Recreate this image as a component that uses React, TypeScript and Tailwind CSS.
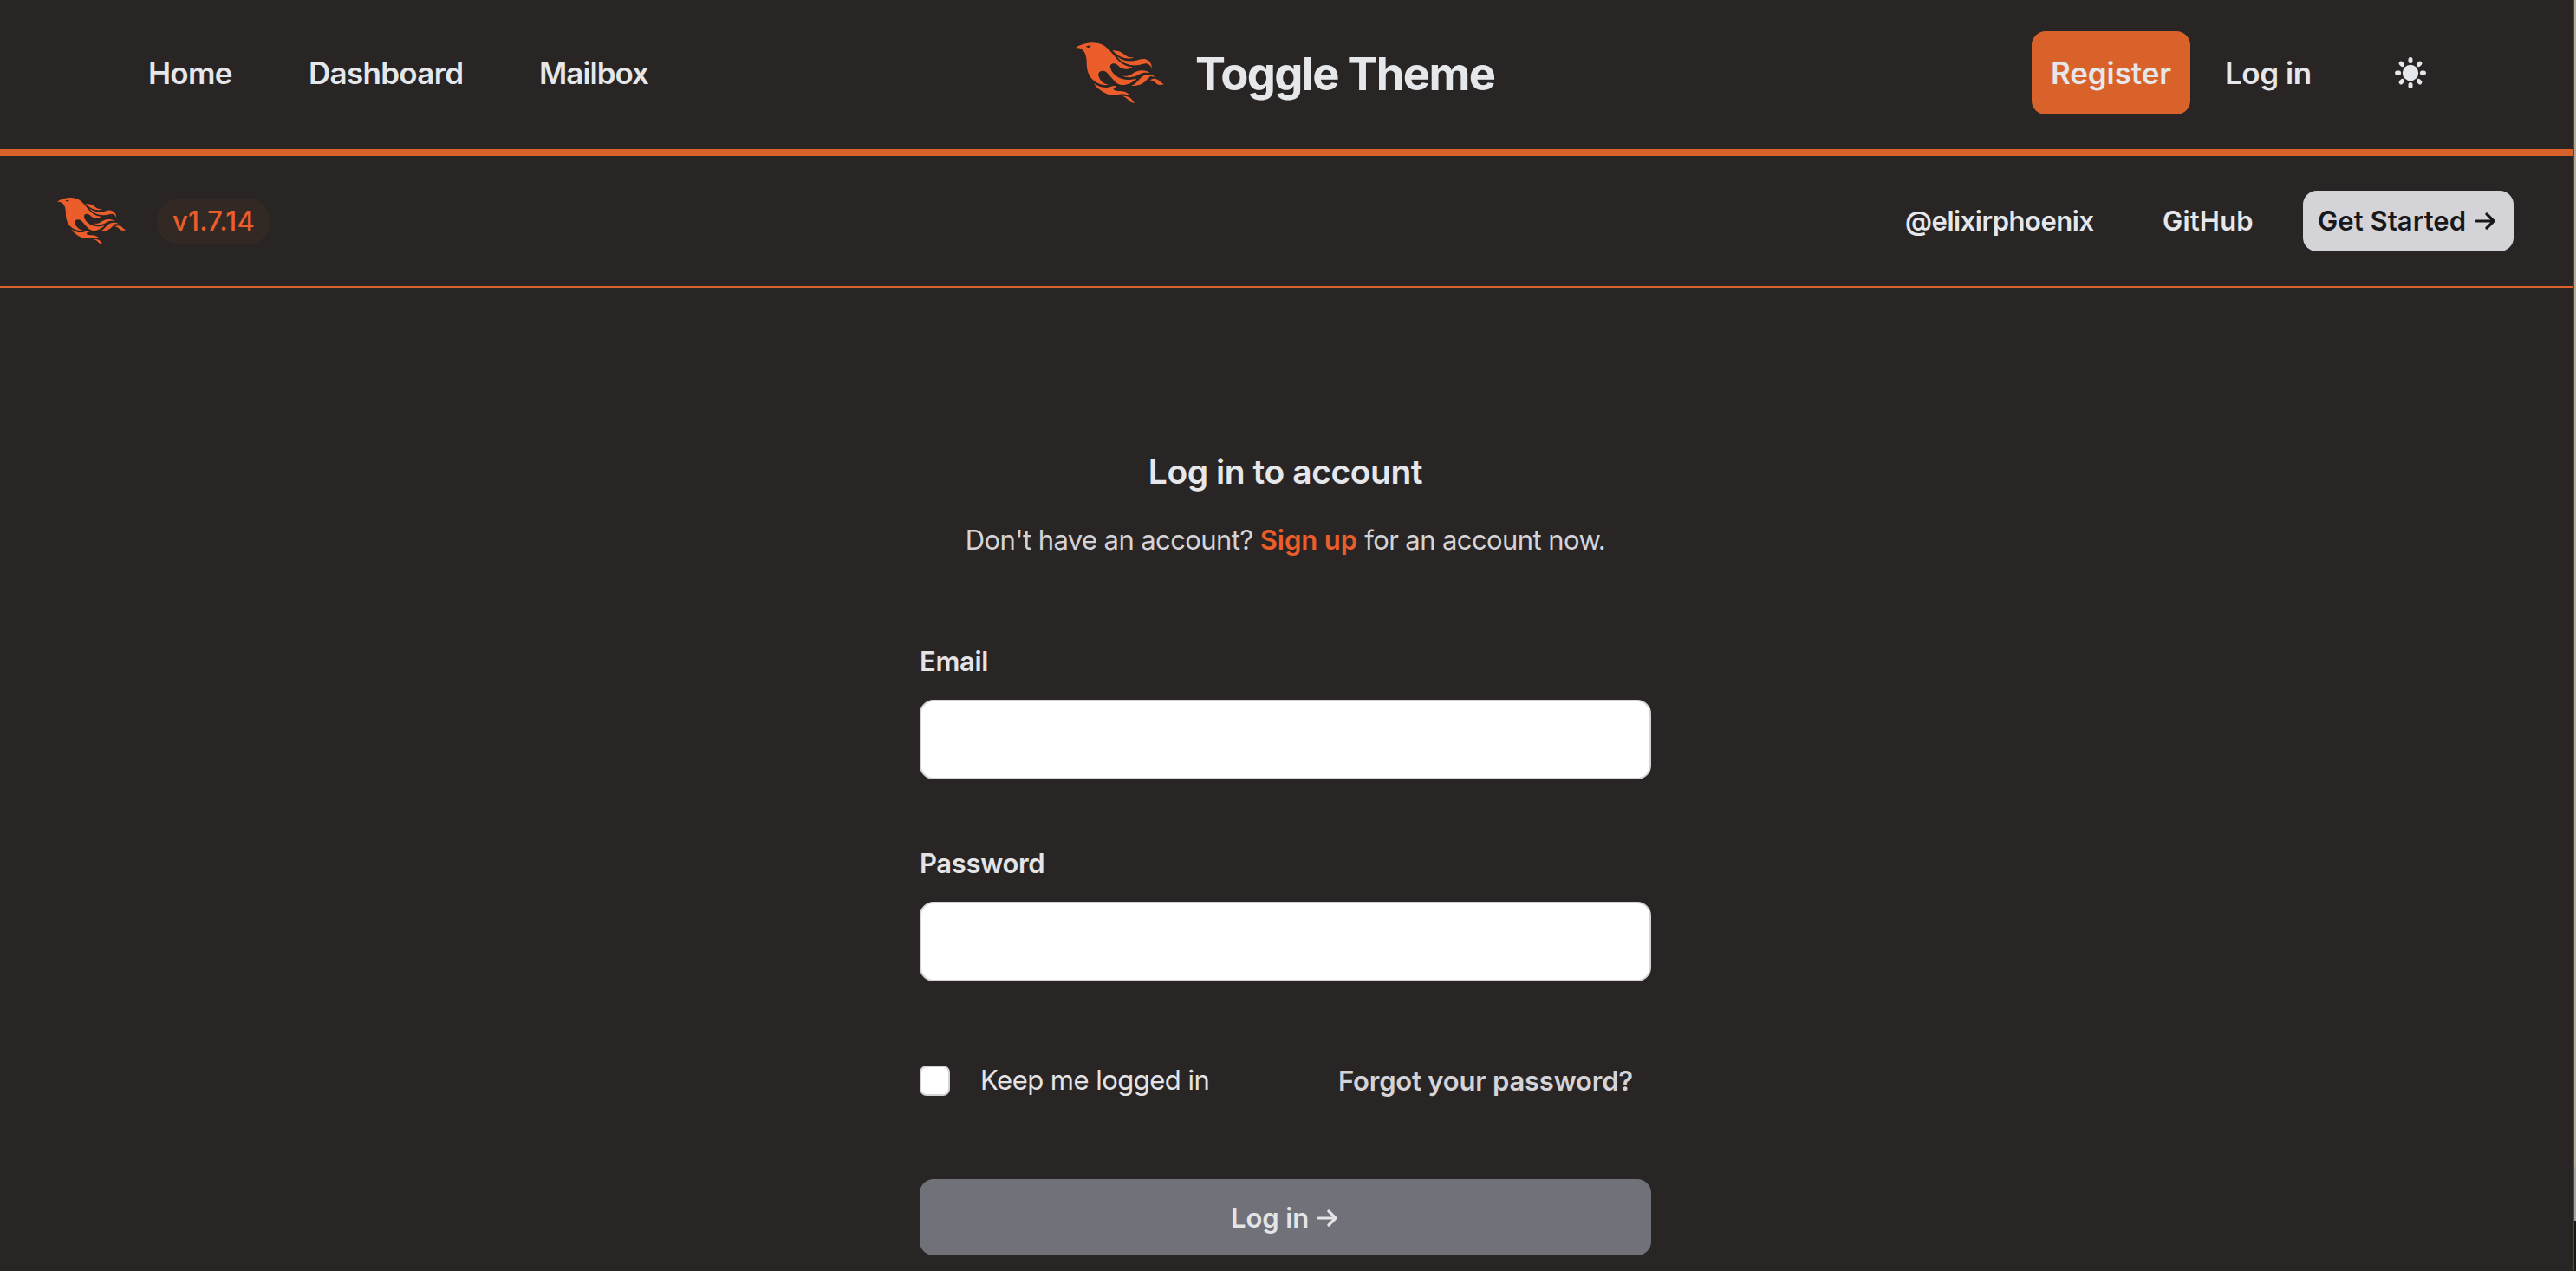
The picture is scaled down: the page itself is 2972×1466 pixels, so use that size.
import React from "react";

const PHOENIX_PATH =
  "m26.371 33.477-.552-.1c-3.92-.729-6.397-3.1-7.57-6.829-.733-2.324.597-4.035 3.035-4.148 1.995-.092 3.362 1.055 4.57 2.39 1.557 1.72 2.984 3.558 4.514 5.305 2.202 2.515 4.797 4.134 8.347 3.634 3.183-.448 5.958-1.725 8.371-3.828.363-.316.761-.592 1.144-.886l-.241-.284c-2.027.63-4.093.841-6.205.735-3.195-.16-6.24-.828-8.964-2.582-2.486-1.601-4.319-3.746-5.19-6.611-.704-2.315.736-3.934 3.135-3.6.948.133 1.746.56 2.463 1.165.583.493 1.143 1.015 1.738 1.493 2.8 2.25 6.712 2.375 10.265-.068-5.842-.026-9.817-3.24-13.308-7.313-1.366-1.594-2.7-3.216-4.095-4.785-2.698-3.036-5.692-5.71-9.79-6.623C12.8-.623 7.745.14 2.893 2.361 1.926 2.804.997 3.319 0 4.149c.494 0 .763.006 1.032 0 2.446-.064 4.28 1.023 5.602 3.024.962 1.457 1.415 3.104 1.761 4.798.513 2.515.247 5.078.544 7.605.761 6.494 4.08 11.026 10.26 13.346 2.267.852 4.591 1.135 7.172.555ZM10.751 3.852c-.976.246-1.756-.148-2.56-.962 1.377-.343 2.592-.476 3.897-.528-.107.848-.607 1.306-1.336 1.49Zm32.002 37.924c-.085-.626-.62-.901-1.04-1.228-1.857-1.446-4.03-1.958-6.333-2-1.375-.026-2.735-.128-4.031-.61-.595-.22-1.26-.505-1.244-1.272.015-.78.693-1 1.31-1.184.505-.15 1.026-.247 1.6-.382-1.46-.936-2.886-1.065-4.787-.3-2.993 1.202-5.943 1.06-8.926-.017-1.684-.608-3.179-1.563-4.735-2.408l-.043.03a2.96 2.96 0 0 0 .04-.029c-.038-.117-.107-.12-.197-.054l.122.107c1.29 2.115 3.034 3.817 5.004 5.271 3.793 2.8 7.936 4.471 12.784 3.73A66.714 66.714 0 0 1 37 40.877c1.98-.16 3.866.398 5.753.899Zm-9.14-30.345c-.105-.076-.206-.266-.42-.069 1.745 2.36 3.985 4.098 6.683 5.193 4.354 1.767 8.773 2.07 13.293.51 3.51-1.21 6.033-.028 7.343 3.38.19-3.955-2.137-6.837-5.843-7.401-2.084-.318-4.01.373-5.962.94-5.434 1.575-10.485.798-15.094-2.553Zm27.085 15.425c.708.059 1.416.123 2.124.185-1.6-1.405-3.55-1.517-5.523-1.404-3.003.17-5.167 1.903-7.14 3.972-1.739 1.824-3.31 3.87-5.903 4.604.043.078.054.117.066.117.35.005.699.021 1.047.005 3.768-.17 7.317-.965 10.14-3.7.89-.86 1.685-1.817 2.544-2.71.716-.746 1.584-1.159 2.645-1.07Zm-8.753-4.67c-2.812.246-5.254 1.409-7.548 2.943-1.766 1.18-3.654 1.738-5.776 1.37-.374-.066-.75-.114-1.124-.17l-.013.156c.135.07.265.151.405.207.354.14.702.308 1.07.395 4.083.971 7.992.474 11.516-1.803 2.221-1.435 4.521-1.707 7.013-1.336.252.038.503.083.756.107.234.022.479.255.795.003-2.179-1.574-4.526-2.096-7.094-1.872Zm-10.049-9.544c1.475.051 2.943-.142 4.486-1.059-.452.04-.643.04-.827.076-2.126.424-4.033-.04-5.733-1.383-.623-.493-1.257-.974-1.889-1.457-2.503-1.914-5.374-2.555-8.514-2.5.05.154.054.26.108.315 3.417 3.455 7.371 5.836 12.369 6.008Zm24.727 17.731c-2.114-2.097-4.952-2.367-7.578-.537 1.738.078 3.043.632 4.101 1.728a13 13 0 0 0 1.182 1.106c1.6 1.29 4.311 1.352 5.896.155-1.861-.726-1.861-.726-3.601-2.452Zm-21.058 16.06c-1.858-3.46-4.981-4.24-8.59-4.008a9.667 9.667 0 0 1 2.977 1.39c.84.586 1.547 1.311 2.243 2.055 1.38 1.473 3.534 2.376 4.962 2.07-.656-.412-1.238-.848-1.592-1.507Z";

function Phoenix({ className }: { className: string }) {
  return (
    <svg viewBox="0 0 71 48" className={className} fill="#eb5d2b" aria-hidden="true">
      <path d={PHOENIX_PATH} />
    </svg>
  );
}

function Arrow({ className }: { className: string }) {
  return (
    <svg
      viewBox="0 0 24 24"
      className={className}
      fill="none"
      stroke="currentColor"
      strokeWidth="3.2"
      strokeLinecap="round"
      strokeLinejoin="round"
      aria-hidden="true"
    >
      <path d="M2 12H22M14 4L22 12L14 20" />
    </svg>
  );
}

function Sun() {
  return (
    <svg viewBox="-18 -18 36 36" className="size-9" aria-hidden="true">
      <circle r="9.2" fill="#e5e7eb" />
      {[0, 45, 90, 135, 180, 225, 270, 315].map((angle) => (
        <path
          key={angle}
          d="M0 -13.4V-15.4"
          stroke="#e5e7eb"
          strokeWidth="5"
          strokeLinecap="round"
          transform={`rotate(${angle})`}
        />
      ))}
    </svg>
  );
}

function Field({ label, type, className }: { label: string; type: string; className: string }) {
  return (
    <label className={`flex flex-col ${className}`}>
      <span className="h-12 text-[31px] leading-[48px] font-semibold tracking-[-0.35px]">{label}</span>
      <input
        type={type}
        className="mt-5 h-[92px] w-full rounded-2xl border-2 border-[#d4d4d8] bg-white px-5 text-zinc-900 outline-none"
      />
    </label>
  );
}

export default function App() {
  return (
    <div className="flex h-[1466px] w-[2972px] overflow-hidden bg-[#292524] font-['Inter',sans-serif] whitespace-nowrap text-[#e5e7eb]">
      <div className="w-[2969px] shrink-0">
        <header className="flex h-[180px] items-center border-b-8 border-[#d9622a] pb-1 text-[35px] leading-[48px]">
          <nav className="flex w-[1241px] shrink-0 pl-[171px] font-[560]">
            <a className="w-[185px] tracking-[-0.75px]">Home</a>
            <a className="w-[266px] tracking-[-0.7px]">Dashboard</a>
            <a className="tracking-[-1px]">Mailbox</a>
          </nav>
          <Phoenix className="h-[70px] w-[103px] shrink-0" />
          <h1 className="ml-[35px] w-[965px] shrink-0 pt-0.5 text-[52.5px] leading-[64px] font-bold tracking-[-1.7px]">
            Toggle Theme
          </h1>
          <a className="flex h-24 w-[183px] shrink-0 items-center justify-center rounded-2xl bg-[#d9622a] font-semibold tracking-[-0.12px]">
            Register
          </a>
          <a className="ml-10 w-[196px] shrink-0 font-semibold tracking-[-0.43px]">Log in</a>
          <Sun />
        </header>

        <div className="flex h-[152px] items-center border-b-2 border-[#d9622a] text-[31px] leading-[48px] font-semibold">
          <Phoenix className="ml-[66px] h-[54px] w-20 shrink-0" />
          <span className="ml-[35px] flex h-[53px] w-[131px] items-center justify-center rounded-full bg-[#332924] font-medium tracking-[0.25px] text-[#eb5d2b]">
            v1.7.14
          </span>
          <div className="ml-auto flex items-center pr-[69px]">
            <a className="w-[297px] tracking-[-0.46px]">@elixirphoenix</a>
            <a className="w-[162px] tracking-[0.17px]">GitHub</a>
            <a className="flex h-[70px] w-[243px] items-center rounded-2xl bg-[#d4d4d8] pl-[17px] text-[#18181b]">
              <span className="w-[181px] tracking-[0.05px]">Get Started</span>
              <Arrow className="size-6" />
            </a>
          </div>
        </div>

        <main className="flex w-[2966px] flex-col items-center pt-[180px]">
          <h2 className="h-16 text-[39px] leading-[64px] font-semibold tracking-[-0.45px]">Log in to account</h2>
          <p className="mt-[23px] h-12 text-[31px] leading-[48px] tracking-[-0.59px] text-[#d4d4d8]">
            Don't have an account? <a className="font-semibold tracking-[-0.07px] text-[#eb5d2b]">Sign up</a> for an
            account now.
          </p>
          <form className="flex w-[844px] flex-col text-[#e4e4e7]" onSubmit={(event) => event.preventDefault()}>
            <Field label="Email" type="email" className="mt-[92px]" />
            <Field label="Password" type="password" className="mt-[73px]" />
            <div className="mt-24 flex h-9 items-center text-[31px] leading-[48px]">
              <label className="flex w-[483px] items-center">
                <input
                  type="checkbox"
                  className="size-[35px] appearance-none rounded-lg border-2 border-[#d4d4d8] bg-white"
                />
                <span className="ml-[35px] tracking-[-0.52px]">Keep me logged in</span>
              </label>
              <a className="pt-0.5 font-semibold tracking-[-0.2px] text-[#d4d4d8]">Forgot your password?</a>
            </div>
            <button className="mt-24 flex h-[88px] items-center rounded-2xl bg-[#71717a] pt-0.5 pl-[359px] text-[31px] leading-[48px] font-semibold">
              <span className="w-[99px] text-left tracking-[-0.1px]">Log in</span>
              <Arrow className="size-6" />
            </button>
          </form>
        </main>
      </div>
      <div className="w-px shrink-0 bg-[#4b4845]" />
      <div className="flex w-0.5 shrink-0 flex-col">
        <div className="h-[1346px] bg-[#b3ac9b]" />
        <div className="h-[62px] bg-[#a3a3a1]" />
        <div className="flex-1 bg-[#171a0c]" />
      </div>
    </div>
  );
}
